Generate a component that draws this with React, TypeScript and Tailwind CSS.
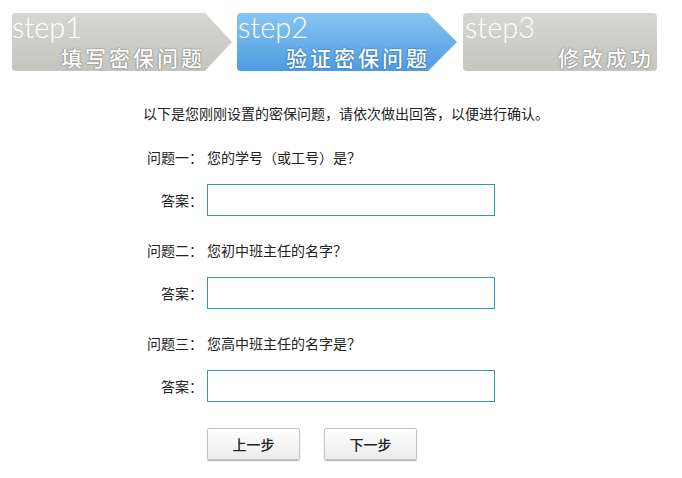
import React from "react";

const cjk = { fontFamily: '"Noto Sans CJK SC", "Noto Sans", sans-serif' };
const latin = { fontFamily: 'Lato, "DejaVu Sans", sans-serif' };

function QuestionRow({ label, text }: { label: string; text: string }) {
  return (
    <div className="flex h-[20px] items-center text-[14px] leading-[20px] text-[#222]">
      <div className="w-[203px] shrink-0 text-right">{label}</div>
      <div className="ml-[4px]">{text}</div>
    </div>
  );
}

function AnswerRow() {
  return (
    <div className="flex h-[32px] items-center text-[14px] text-[#222]">
      <div className="w-[203px] shrink-0 text-right">答案：</div>
      <input
        type="text"
        className="ml-[4px] h-[32px] w-[288px] border border-[#3198b8] bg-white outline-none"
      />
    </div>
  );
}

export default function App() {
  return (
    <div className="w-[682px] h-[478px] bg-white" style={cjk}>
      {/* steps header */}
      <div className="flex pt-[13px] pl-[12px]">
        <div className="relative flex h-[58px] w-[220px] flex-col rounded-l-[4px] bg-gradient-to-b from-[#d6d6d2] to-[#c4c4c0] [clip-path:polygon(0_0,193px_0,220px_50%,193px_100%,0_100%)]">
          <div className="h-[28px] text-[29px] font-light leading-[28px] text-white" style={latin}>
            step1
          </div>
          <div className="mt-[5px] pr-[27px] text-right text-[21px] font-medium leading-[22px] tracking-[3px] text-white [text-shadow:0_0_2px_#7a7a78,0_0_1px_#7a7a78]">
            填写密保问题
          </div>
        </div>
        <div className="relative ml-[5px] flex h-[58px] w-[220px] flex-col rounded-l-[4px] bg-gradient-to-b from-[#86c6f4] to-[#4f9be0] [clip-path:polygon(0_0,191px_0,220px_50%,191px_100%,0_100%)]">
          <div className="h-[28px] pl-[1px] text-[29px] font-light leading-[28px] text-white" style={latin}>
            step2
          </div>
          <div className="mt-[5px] pr-[27px] text-right text-[21px] font-medium leading-[22px] tracking-[3px] text-white [text-shadow:0_0_2px_#2b6aa8,0_0_1px_#2b6aa8]">
            验证密保问题
          </div>
        </div>
        <div className="ml-[6px] flex h-[58px] w-[194px] flex-col rounded-[4px] bg-gradient-to-b from-[#d6d6d2] to-[#c4c4c0]">
          <div className="h-[28px] pl-[2px] text-[29px] font-light leading-[28px] text-white" style={latin}>
            step3
          </div>
          <div className="mt-[5px] pr-[3px] text-right text-[21px] font-medium leading-[22px] tracking-[3px] text-white [text-shadow:0_0_2px_#7a7a78,0_0_1px_#7a7a78]">
            修改成功
          </div>
        </div>
      </div>

      {/* intro */}
      <div className="mt-[32px] h-[20px] pl-[143px] text-[14px] leading-[20px] text-[#222]">
        以下是您刚刚设置的密保问题，请依次做出回答，以便进行确认。
      </div>

      <div className="mt-[24px]">
        <QuestionRow label="问题一：" text="您的学号（或工号）是？" />
      </div>
      <div className="mt-[17px]">
        <AnswerRow />
      </div>
      <div className="mt-[24px]">
        <QuestionRow label="问题二：" text="您初中班主任的名字？" />
      </div>
      <div className="mt-[17px]">
        <AnswerRow />
      </div>
      <div className="mt-[24px]">
        <QuestionRow label="问题三：" text="您高中班主任的名字是？" />
      </div>
      <div className="mt-[17px]">
        <AnswerRow />
      </div>

      {/* buttons */}
      <div className="mt-[26px] flex gap-[24px] pl-[207px]">
        <button className="h-[32px] w-[93px] rounded-[2px] border border-[#c6c6c6] bg-gradient-to-b from-white to-[#ebebeb] text-[14px] font-medium text-[#222] shadow-[0_1px_1px_#b0b0b0]">
          上一步
        </button>
        <button className="h-[32px] w-[93px] rounded-[2px] border border-[#c6c6c6] bg-gradient-to-b from-white to-[#ebebeb] text-[14px] font-medium text-[#222] shadow-[0_1px_1px_#b0b0b0]">
          下一步
        </button>
      </div>
    </div>
  );
}
